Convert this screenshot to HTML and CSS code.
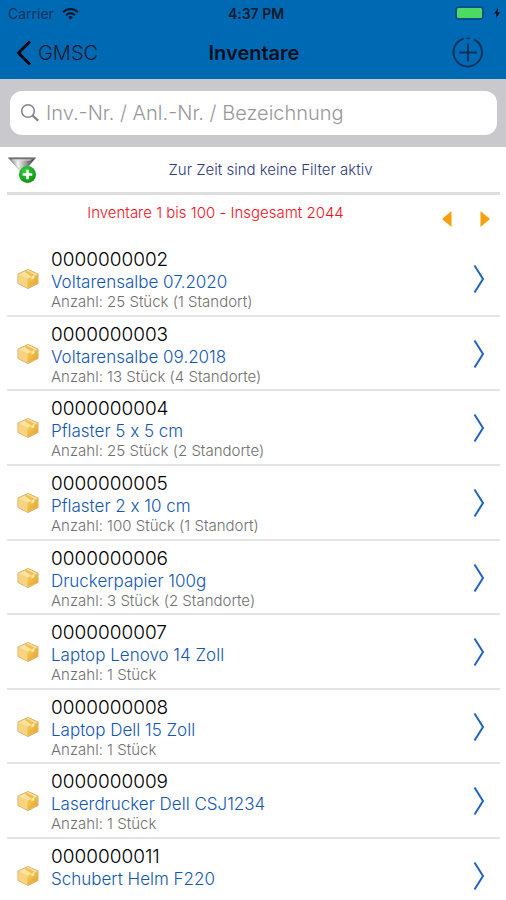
FILE: index.html
```html
<!DOCTYPE html>
<html lang="de">
<head>
  <meta charset="UTF-8">
  <meta name="viewport" content="width=device-width, initial-scale=1.0">
  <title>Inventare</title>
  <link rel="stylesheet" href="styles.css">
</head>
<body>
  <!-- Shared icons -->
  <svg class="icon-defs" width="0" height="0" aria-hidden="true">
    <defs>
      <linearGradient id="box-right" x1="0" y1="0" x2="1" y2="1">
        <stop offset="0" stop-color="#fbd155" />
        <stop offset="1" stop-color="#dfa030" />
      </linearGradient>
      <linearGradient id="funnel-metal" x1="0" y1="0" x2="1" y2="0">
        <stop offset="0" stop-color="#666" />
        <stop offset="0.35" stop-color="#f4f4f4" />
        <stop offset="0.65" stop-color="#999" />
        <stop offset="1" stop-color="#222" />
      </linearGradient>
      <radialGradient id="plus-green" cx="0.4" cy="0.3" r="0.8">
        <stop offset="0" stop-color="#35cf3c" />
        <stop offset="1" stop-color="#078a0d" />
      </radialGradient>
      <symbol id="icon-box" viewBox="0 0 22 20">
        <path d="M11 .5 21 5v9.500L11 19.500 1 14.500V5z" fill="#f3cf80" stroke="#d0a45c" stroke-width=".9" stroke-linejoin="round" />
        <path d="M1.400 5.200 10.500 9.500v9.500l-9.100-4.700z" fill="#f8d380" />
        <path d="M10.500 9.500 20.600 5.200v9.100L10.500 19z" fill="url(#box-right)" />
        <path d="M11 1 20.500 5.200l-10 4.300-9-4.300z" fill="#fbe2a0" />
        <path d="m7.500 2.700 2.300-1 7.500 3.700-2.800 2.400z" fill="#f1c04e" />
        <path d="m14.500 7.800 2.800-1.300v2.800l-2.800 1.300z" fill="#fdeeb8" />
      </symbol>
      <symbol id="icon-chevron" viewBox="0 0 12 30">
        <path d="M1.500 1.500 10 15 1.500 28.500" fill="none" stroke="#1e62c8" stroke-width="2" />
      </symbol>
    </defs>
  </svg>

  <header class="header">
    <div class="status-bar">
      <div class="status-left">
        <span>Carrier</span>
        <svg width="17" height="13" viewBox="0 0 17 13" fill="none" stroke="#061727" stroke-width="2">
          <path d="M1 5.200a10.500 10.500 0 0 1 15 0" />
          <path d="M4 8.200a6.300 6.300 0 0 1 9 0" />
          <path d="M8.500 12.500 6.200 10.200a3.200 3.200 0 0 1 4.600 0z" fill="#061727" stroke="none" />
        </svg>
      </div>
      <div class="status-time">4:37 PM</div>
      <div class="status-right">
        <svg width="31" height="14" viewBox="0 0 31 14">
          <rect x="1" y="1" width="27" height="12" rx="3" fill="none" stroke="#064a80" stroke-width="1.500" />
          <rect x="2" y="2" width="25" height="10" rx="1.500" fill="#4cd964" />
          <path d="M29.500 5q1.500 2 0 4z" fill="#064a80" />
        </svg>
        <svg width="6" height="10" viewBox="0 0 6 10">
          <path d="M4 0 0 5.600h2.400L2 10l4-5.800H3.600z" fill="#04101c" />
        </svg>
      </div>
    </div>
    <nav class="nav-bar">
      <a class="back" href="#">
        <svg width="16" height="26" viewBox="0 0 16 26">
          <path d="M14 1.500 2.500 13 14 24.500" fill="none" stroke="#00080f" stroke-width="3" />
        </svg>
        <span>GMSC</span>
      </a>
      <h1 class="title">Inventare</h1>
      <button class="add-btn" type="button" aria-label="Neu">
        <svg width="32" height="32" viewBox="0 0 32 32" fill="none" stroke="#06335a" stroke-width="2">
          <path d="M11.500 1.700A14.200 14.200 0 1 0 22 2.500" />
          <path d="M14.500 1.200a14 14 0 0 1 3.500 .1" stroke-width="1.500" />
          <path d="M16 6.500v18M7 15.500h18" />
        </svg>
      </button>
    </nav>
  </header>

  <form class="search-bar">
    <label class="search-field">
      <svg width="20" height="20" viewBox="0 0 20 20" fill="none" stroke="#85858a" stroke-width="1.600">
        <circle cx="8" cy="8" r="6.300" />
        <path d="m12.600 12.600 5.600 5" stroke-width="2.200" />
      </svg>
      <input class="search-input" type="search" aria-label="Suche" placeholder="Inv.-Nr. / Anl.-Nr. / Bezeichnung">
    </label>
  </form>

  <main class="content">
    <div class="filter-row">
      <button class="filter-btn" type="button" aria-label="Filter hinzufügen">
        <svg width="30" height="28" viewBox="0 0 30 28">
          <path d="M1.500 2h27L18 14.500V23l-5-3v-5.500z" fill="url(#funnel-metal)" stroke="#888" stroke-width=".6" />
          <path d="M1 1.500h28l-2 2H3z" fill="#707070" />
          <path d="M5 3.500h20l-1.500 1H6z" fill="#ddd" />
          <circle cx="20.500" cy="18.500" r="8.500" fill="url(#plus-green)" />
          <path d="M20.500 13.700v9.600M15.700 18.500h9.600" stroke="#fff" stroke-width="2.600" />
        </svg>
      </button>
      <p class="filter-text">Zur Zeit sind keine Filter aktiv</p>
    </div>

    <div class="pager">
      <p class="pager-text">Inventare 1 bis 100 - Insgesamt 2044</p>
      <div class="pager-buttons">
        <button class="pager-btn" type="button" aria-label="Zurück">
          <svg width="10" height="16" viewBox="0 0 10 16"><path d="M9.500 0v16L0 8z" fill="#f6a00c" /></svg>
        </button>
        <button class="pager-btn" type="button" aria-label="Weiter">
          <svg width="10" height="16" viewBox="0 0 10 16"><path d="M.5 0v16L10 8z" fill="#f6a00c" /></svg>
        </button>
      </div>
    </div>

    <ul class="list">
      <li class="item">
        <a class="item-link" href="#">
          <svg class="box"><use href="#icon-box" /></svg>
          <div class="item-text">
            <div class="item-number">0000000002</div>
            <div class="item-name">Voltarensalbe 07.2020</div>
            <div class="item-count">Anzahl: 25 Stück (1 Standort)</div>
          </div>
          <svg class="chevron"><use href="#icon-chevron" /></svg>
        </a>
      </li>
      <li class="item">
        <a class="item-link" href="#">
          <svg class="box"><use href="#icon-box" /></svg>
          <div class="item-text">
            <div class="item-number">0000000003</div>
            <div class="item-name">Voltarensalbe 09.2018</div>
            <div class="item-count">Anzahl: 13 Stück (4 Standorte)</div>
          </div>
          <svg class="chevron"><use href="#icon-chevron" /></svg>
        </a>
      </li>
      <li class="item">
        <a class="item-link" href="#">
          <svg class="box"><use href="#icon-box" /></svg>
          <div class="item-text">
            <div class="item-number">0000000004</div>
            <div class="item-name">Pflaster 5 x 5 cm</div>
            <div class="item-count">Anzahl: 25 Stück (2 Standorte)</div>
          </div>
          <svg class="chevron"><use href="#icon-chevron" /></svg>
        </a>
      </li>
      <li class="item">
        <a class="item-link" href="#">
          <svg class="box"><use href="#icon-box" /></svg>
          <div class="item-text">
            <div class="item-number">0000000005</div>
            <div class="item-name">Pflaster 2 x 10 cm</div>
            <div class="item-count">Anzahl: 100 Stück (1 Standort)</div>
          </div>
          <svg class="chevron"><use href="#icon-chevron" /></svg>
        </a>
      </li>
      <li class="item">
        <a class="item-link" href="#">
          <svg class="box"><use href="#icon-box" /></svg>
          <div class="item-text">
            <div class="item-number">0000000006</div>
            <div class="item-name">Druckerpapier 100g</div>
            <div class="item-count">Anzahl: 3 Stück (2 Standorte)</div>
          </div>
          <svg class="chevron"><use href="#icon-chevron" /></svg>
        </a>
      </li>
      <li class="item">
        <a class="item-link" href="#">
          <svg class="box"><use href="#icon-box" /></svg>
          <div class="item-text">
            <div class="item-number">0000000007</div>
            <div class="item-name">Laptop Lenovo 14 Zoll</div>
            <div class="item-count">Anzahl: 1 Stück</div>
          </div>
          <svg class="chevron"><use href="#icon-chevron" /></svg>
        </a>
      </li>
      <li class="item">
        <a class="item-link" href="#">
          <svg class="box"><use href="#icon-box" /></svg>
          <div class="item-text">
            <div class="item-number">0000000008</div>
            <div class="item-name">Laptop Dell 15 Zoll</div>
            <div class="item-count">Anzahl: 1 Stück</div>
          </div>
          <svg class="chevron"><use href="#icon-chevron" /></svg>
        </a>
      </li>
      <li class="item">
        <a class="item-link" href="#">
          <svg class="box"><use href="#icon-box" /></svg>
          <div class="item-text">
            <div class="item-number">0000000009</div>
            <div class="item-name">Laserdrucker Dell CSJ1234</div>
            <div class="item-count">Anzahl: 1 Stück</div>
          </div>
          <svg class="chevron"><use href="#icon-chevron" /></svg>
        </a>
      </li>
      <li class="item">
        <a class="item-link" href="#">
          <svg class="box"><use href="#icon-box" /></svg>
          <div class="item-text">
            <div class="item-number">0000000011</div>
            <div class="item-name">Schubert Helm F220</div>
          </div>
          <svg class="chevron"><use href="#icon-chevron" /></svg>
        </a>
      </li>
    </ul>
  </main>
</body>
</html>
```
FILE: styles.css
```css
:root {
  --blue: #0069b4;
  --link: #1257b4;
  --grey-bar: #c8c8cd;
  --line: #dedede;
  --line-light: #e4e4e4;
}

* {
  box-sizing: border-box;
}

body {
  margin: 0;
  min-height: 100vh;
  display: flex;
  flex-direction: column;
  font-family: Inter, "Liberation Sans", sans-serif;
  font-weight: 300;
  /* keep the plain x between digits */
  font-feature-settings: "calt" 0;
  background-color: white;
  color: #000;
}

h1,
p,
ul {
  margin: 0;
  padding: 0;
}

button {
  display: flex;
  padding: 0;
  border: none;
  background: none;
  cursor: pointer;
}

a {
  color: inherit;
  text-decoration: none;
}

.icon-defs {
  position: absolute;
}

.header {
  background-color: var(--blue);
}

.status-bar,
.nav-bar {
  display: grid;
  grid-template-columns: 1fr auto 1fr;
  align-items: center;
}

.status-bar {
  height: 26px;
  padding: 0 6px 0 8px;
  font-size: 14px;
  font-weight: 400;
  color: #063458;
}

.status-left,
.status-right {
  display: flex;
  align-items: center;
  gap: 8px;
}

.status-right {
  justify-content: flex-end;
}

.status-time {
  padding-left: 4px;
  font-weight: 600;
  color: #04192b;
}

.nav-bar {
  height: 53px;
  padding: 0 22px 0 16px;
}

.back {
  display: flex;
  align-items: center;
  gap: 6px;
  font-size: 20px;
  color: #04192b;
}

.title {
  padding-left: 8px;
  font-size: 20px;
  font-weight: 600;
  color: #00101e;
}

.add-btn {
  justify-self: end;
}

.search-bar {
  padding: 12px 9px 12px 10px;
  background-color: var(--grey-bar);
}

.search-field {
  display: flex;
  align-items: center;
  gap: 6px;
  height: 44px;
  padding: 0 10px;
  border-radius: 12px;
  background-color: white;
}

.search-input {
  flex: 1;
  min-width: 0;
  padding: 0;
  border: none;
  outline: none;
  background: none;
  font-family: inherit;
  font-size: 20px;
  font-weight: 300;
}

.search-input::placeholder {
  color: #98989c;
}

.content {
  flex: 1;
  display: flex;
  flex-direction: column;
  padding: 0 6px 0 7px;
}

.filter-row {
  display: flex;
  align-items: center;
  height: 48px;
  border-bottom: 3px solid var(--line);
}

.filter-text {
  flex: 1;
  padding-left: 4px;
  text-align: center;
  font-size: 15px;
  color: #2f3a80;
}

.pager {
  display: flex;
  align-items: center;
  height: 47px;
  padding-right: 10px;
}

.pager-text {
  flex: 1;
  padding: 0 18px 12px 0;
  text-align: center;
  font-size: 15px;
  color: #f5101c;
}

.pager-buttons {
  display: flex;
  gap: 28px;
}

/* rows share the free height, the last one is cut short */
.list {
  flex: 1;
  display: grid;
  grid-template-rows: repeat(8, 1fr) 61px;
  list-style: none;
}

.item {
  border-bottom: 2px solid var(--line-light);
}

.item:last-child {
  border-bottom: none;
}

.item-link {
  display: flex;
  gap: 12px;
  padding: 7px 15px 0 10px;
}

.item-text {
  flex: 1;
}

.box {
  width: 22px;
  height: 20px;
  margin-top: 20px;
}

.chevron {
  width: 12px;
  height: 30px;
  margin-top: 15px;
}

.item-number {
  font-size: 19px;
  line-height: 22px;
}

.item-name {
  font-size: 17px;
  line-height: 22px;
  color: var(--link);
}

.item-count {
  font-size: 15px;
  line-height: 17px;
  color: #707070;
}
```
